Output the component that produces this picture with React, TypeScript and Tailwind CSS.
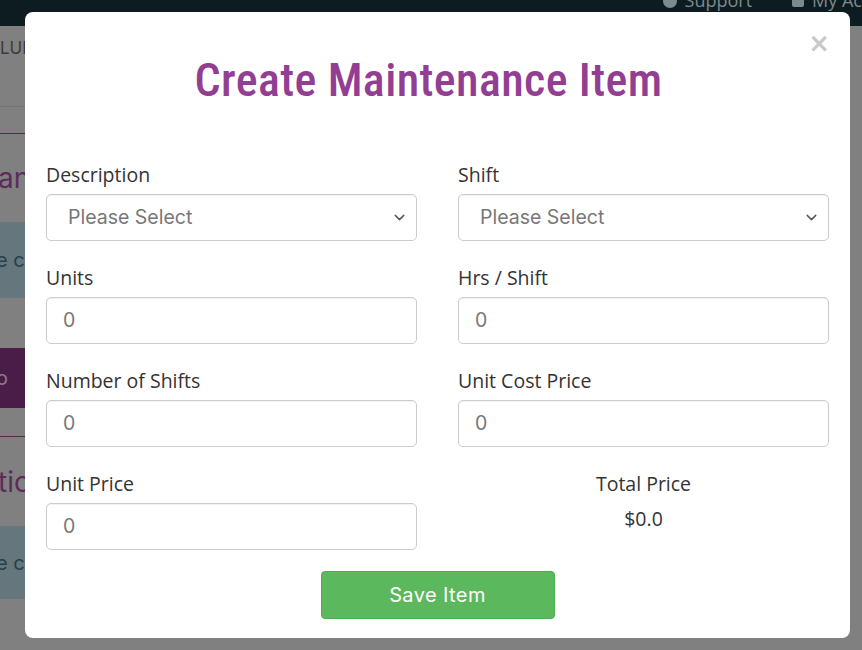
import { ChevronDown } from 'lucide-react'

const open = "font-['Open_Sans',sans-serif]"
const pop = "font-['Inter','Lato',sans-serif]"

function Field({ label, select }: { label: string; select?: boolean }) {
  return (
    <div className="flex flex-col">
      <label className={`${open} text-[19.5px] leading-[24px] text-[#333]`}>{label}</label>
      <div className="mt-[7px] h-[47px] rounded-[5px] border border-[#ccc] flex items-center justify-between shadow-[inset_0_1px_1px_rgba(0,0,0,0.06)]">
        {select ? (
          <>
            <span className={`${pop} pl-[21px] text-[19.5px] text-[#777]`}>Please Select</span>
            <ChevronDown className="mr-[8px] w-[17px] h-[17px] text-[#555]" strokeWidth={2} />
          </>
        ) : (
          <span className={`${pop} pl-[16px] text-[19.5px] text-[#777]`}>0</span>
        )}
      </div>
    </div>
  )
}

export default function App() {
  return (
    <div className="relative w-full h-[650px] overflow-hidden bg-[#808080]">
      {/* dimmed page behind */}
      <div className="h-[26px] bg-[#0c1c21] flex justify-end items-start overflow-hidden">
        <div className={`${open} -mt-[13px] flex items-center gap-[40px] text-[18px] text-[#7f898c]`}>
          <span className="flex items-center gap-[8px]">
            <span className="w-[14px] h-[14px] rounded-full bg-[#7f898c] inline-block" />
            Support
          </span>
          <span className="flex items-center gap-[8px]">
            <span className="w-[12px] h-[12px] rounded-[2px] bg-[#7f898c] inline-block" />
            My Ac
          </span>
        </div>
      </div>
      <div className={`${pop} w-[600px] flex flex-col`}>
        <div className="pt-[10px] h-[80px] text-[17px] text-[#3a3a3a]">LUMINA</div>
        <div className="h-px bg-[#737373]" />
        <div className="h-[26px]" />
        <div className="h-px bg-[#54284f]" />
        <div className="h-[88px] flex items-center text-[28px] text-[#5e2a5e] -ml-[2px]">an</div>
        <div className="h-[76px] bg-[#65767c] flex items-center text-[20px] text-[#24414d] -ml-[4px]">e c</div>
        <div className="h-[50px]" />
        <div className="h-[60px] bg-[#4a1c48] flex items-center text-[20px] text-[#8a7a8a] -ml-[4px]">o</div>
        <div className="h-[28px]" />
        <div className="h-px bg-[#54284f]" />
        <div className="h-[89px] flex items-center text-[28px] text-[#5e2a5e] -ml-[2px]">tic</div>
        <div className="h-[73px] bg-[#65767c] flex items-center text-[20px] text-[#24414d] -ml-[4px]">e c</div>
      </div>

      {/* modal */}
      <div className="absolute left-[25px] top-[12px] w-[825px] h-[626px] bg-white rounded-[8px] px-[21px] pt-[40px] pb-[19px] flex flex-col">
        <button className="absolute right-[20px] top-[18px] text-[26px] leading-none font-bold text-[#c8c8c8] font-['DejaVu_Sans',sans-serif]">
          ×
        </button>
        <h2 className="h-[56px] pr-[18px] text-center text-[46px] leading-[56px] font-medium tracking-[0.4px] text-[#923f93] font-['Roboto_Condensed','Liberation_Sans_Narrow','Roboto',sans-serif]">
          Create Maintenance Item
        </h2>
        <div className="mt-[55px] grid grid-cols-2 gap-x-[41px] gap-y-[25px]">
          <Field label="Description" select />
          <Field label="Shift" select />
          <Field label="Units" />
          <Field label="Hrs / Shift" />
          <Field label="Number of Shifts" />
          <Field label="Unit Cost Price" />
          <Field label="Unit Price" />
          <div className={`${open} flex flex-col items-center text-[19.5px] leading-[24px] text-[#333]`}>
            <span>Total Price</span>
            <span className="mt-[11px]">$0.0</span>
          </div>
        </div>
        <div className="mt-[21px] flex justify-center">
          <button className={`${pop} w-[234px] h-[48px] rounded-[4px] bg-[#5cb85c] border border-[#4cae4c] text-white text-[20px] tracking-[0.4px]`}>
            Save Item
          </button>
        </div>
      </div>
    </div>
  )
}
